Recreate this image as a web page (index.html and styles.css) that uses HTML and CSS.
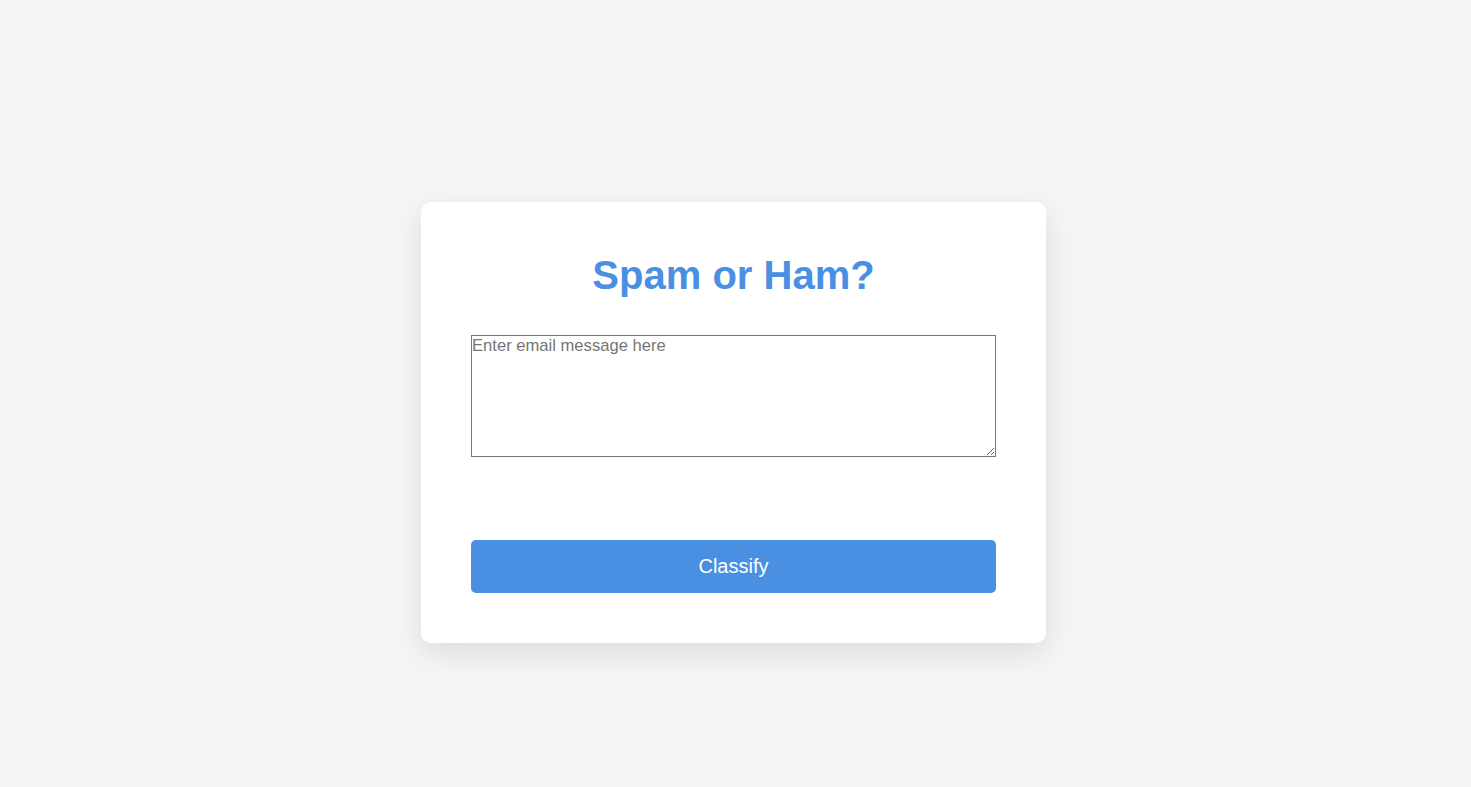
FILE: index.html
```html
<!DOCTYPE html>
<html lang="en">
<head>
<meta charset="utf-8">
<title>Spam or Ham?</title>
<link rel="stylesheet" href="styles.css">
</head>
<body>
<div class="page">
  <div class="card">
    <h1 class="title">Spam or Ham?</h1>
    <textarea class="message" placeholder="Enter email message here"></textarea>
    <div class="result"></div>
    <button class="classify" type="button">Classify</button>
  </div>
</div>
</body>
</html>
```

FILE: styles.css
```css
html, body {
  margin: 0;
  padding: 0;
  background: #f4f6f5;
  font-family: "Liberation Sans", Arial, sans-serif;
}

.page {
  display: flex;
  justify-content: center;
  align-items: flex-start;
  box-sizing: border-box;
  min-height: 100vh;
  padding: 202px 4px 0 0;
}

.card {
  width: 525px;
  padding: 50px;
  background: #ffffff;
  border-radius: 10px;
  box-shadow: 0 10px 30px rgba(0, 0, 0, 0.1);
}

.title {
  margin: 0 0 37px;
  text-align: center;
  color: #4a90e2;
  font-size: 40px;
  font-weight: bold;
  line-height: 46px;
}

.message {
  display: block;
  box-sizing: border-box;
  width: 525px;
  height: 122px;
  margin: 0;
  padding: 0;
  border: 1px solid #767676;
  font-family: "Liberation Sans", Arial, sans-serif;
  font-size: 16.6px;
  color: #222;
  resize: vertical;
}

.message::placeholder {
  color: #757575;
}

.result {
  height: 83px;
}

.classify {
  display: block;
  width: 525px;
  height: 53px;
  margin: 0;
  border: none;
  border-radius: 5px;
  background: #4a90e2;
  color: #ffffff;
  font-family: "Liberation Sans", Arial, sans-serif;
  font-size: 20px;
  cursor: pointer;
}
```
